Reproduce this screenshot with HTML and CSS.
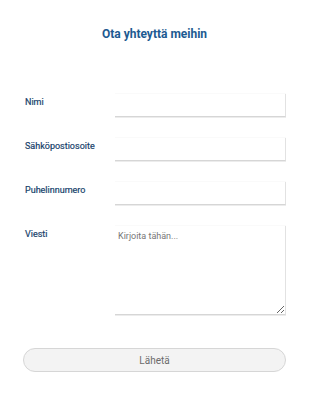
FILE: index.html
```html
<!DOCTYPE html>
<html>
    <head>
        <title>Ota yhteyttä</title>
        <link rel="stylesheet" href="styles.css">
    </head>
    <body>
        <div class="contact">
            <h1>Ota yhteyttä meihin</h1>
            <form class="form">
                <div class="row">
                    <label for="name">Nimi</label>
                    <input id="name" type="text">
                </div>
                <div class="row">
                    <label for="email">Sähköpostiosoite</label>
                    <input id="email" type="email">
                </div>
                <div class="row">
                    <label for="phone">Puhelinnumero</label>
                    <input id="phone" type="tel">
                </div>
                <div class="row">
                    <label for="message">Viesti</label>
                    <textarea id="message" placeholder="Kirjoita tähän..."></textarea>
                </div>
                <button type="button" class="send">Lähetä</button>
            </form>
        </div>
    </body>
</html>
```

FILE: styles.css
```css
body {
    margin: 0;
    padding: 0;
    background: #fff;
    font-family: Roboto, "Liberation Sans", sans-serif;
}

.contact {
    padding: 26px 24px 0 23px;
}

h1 {
    margin: 0 0 52px;
    text-align: center;
    font-size: 12px;
    line-height: 16px;
    font-weight: 700;
    color: #1d5a91;
}

.form {
    display: flex;
    flex-direction: column;
}

.row {
    display: flex;
    margin-bottom: 21px;
}

.row label {
    width: 92px;
    flex-shrink: 0;
    padding: 2px 0 0 2px;
    box-sizing: border-box;
    font-size: 9px;
    line-height: 12px;
    font-weight: 400;
    color: #173f6b;
    -webkit-text-stroke: 0.2px #173f6b;
}

.row input,
.row textarea {
    flex: 1;
    height: 23px;
    margin: 0;
    padding: 4px 3px;
    box-sizing: border-box;
    border: 0;
    border-right: 1px solid #e2e2e2;
    border-bottom: 1px solid #d6d6d6;
    box-shadow: 0 1px 0 #ececec, 0 -1px 0 #fafafa;
    font-family: Roboto, "Liberation Sans", sans-serif;
    font-size: 9px;
    outline: none;
}

.row textarea {
    height: 89px;
    padding: 4px 3px;
    line-height: 12px;
    resize: vertical;
}

.row textarea::placeholder {
    color: #767676;
}

.send {
    margin-top: 12px;
    height: 24px;
    border: 1px solid #d6d6d6;
    border-radius: 12px;
    background: #f3f3f3;
    color: #6b6b6b;
    font-family: Roboto, "Liberation Sans", sans-serif;
    font-size: 10px;
}
```
